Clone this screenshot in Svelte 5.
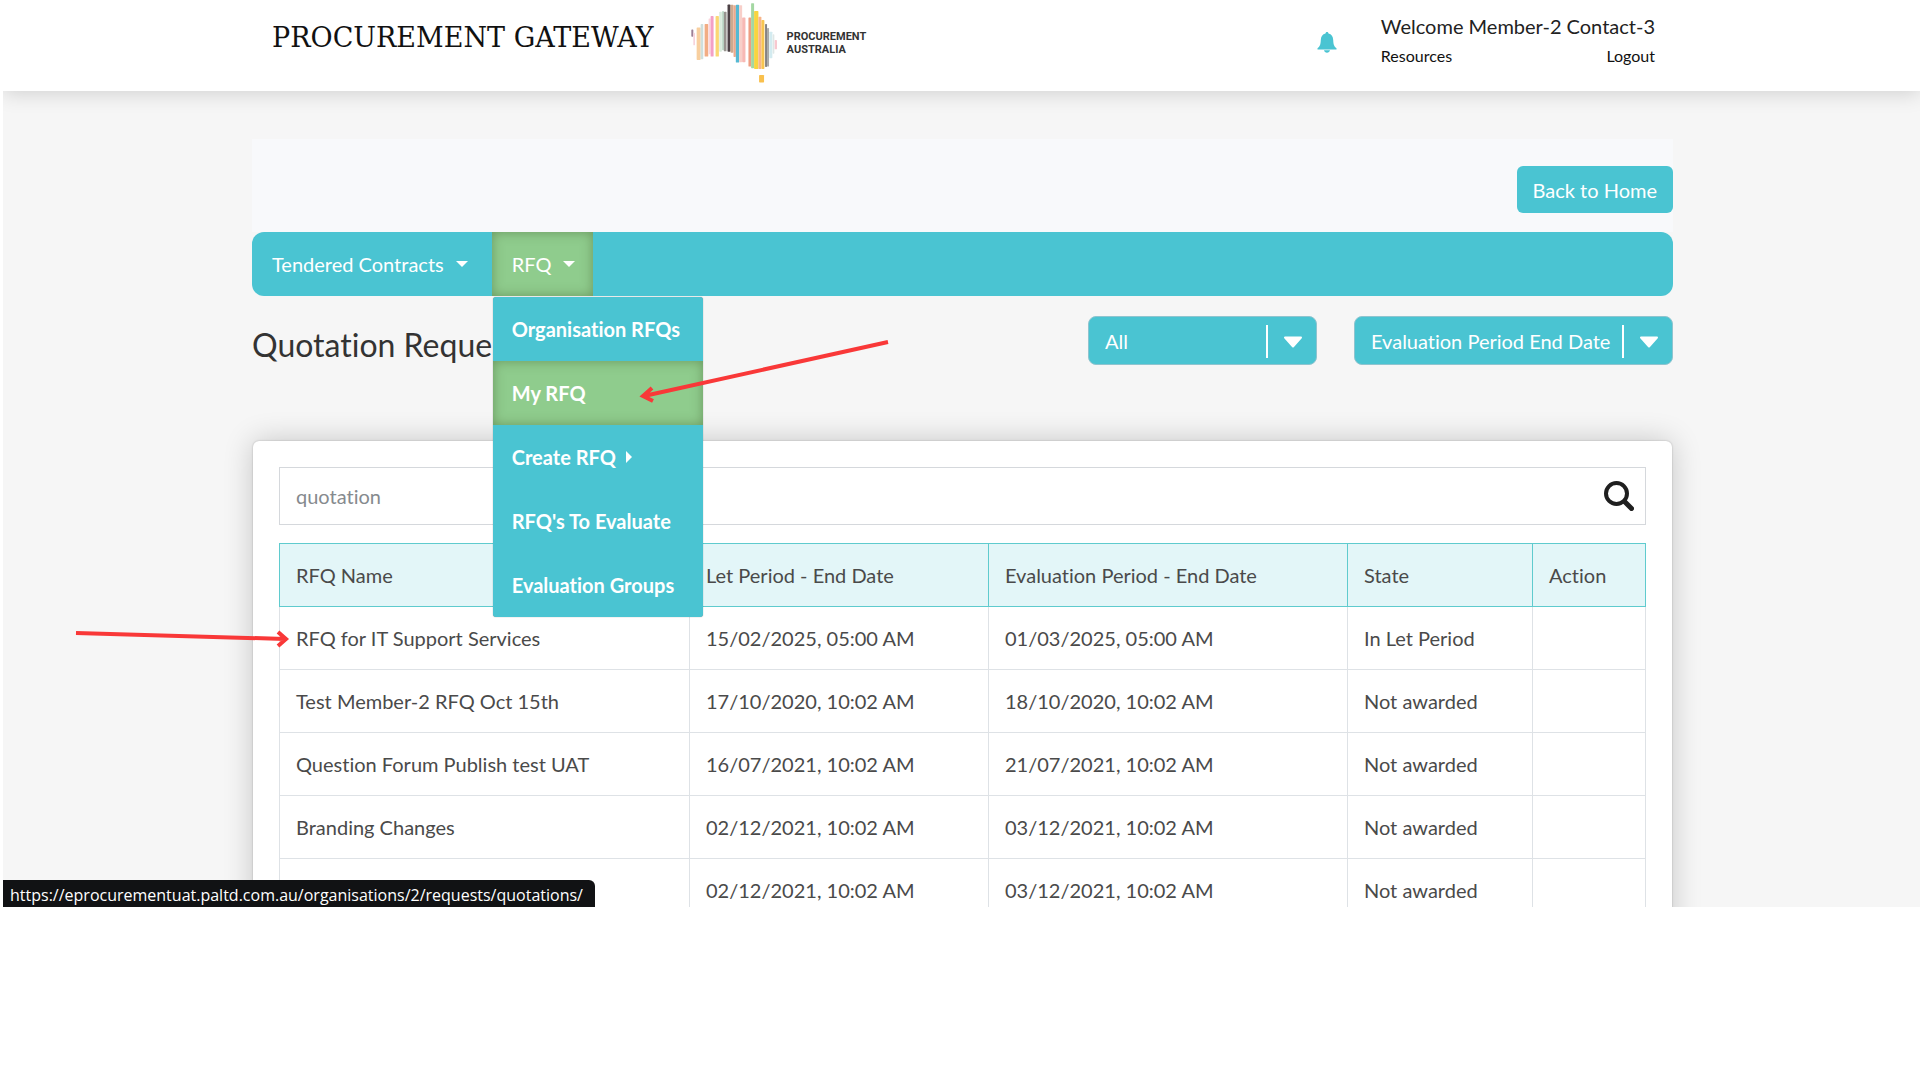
<script>
  const stripes = [
    [30, 88, 6, 22, '#9b7f96'],
    [36, 98, 5, 38, '#f7d3dc'],
    [46, 82, 12, 98, '#f8cf9f'],
    [58, 72, 8, 106, '#cfdfdd'],
    [70, 72, 11, 98, '#f2ad84'],
    [82, 55, 6, 108, '#fbd5dc'],
    [88, 48, 9, 122, '#f3a0c6'],
    [103, 48, 10, 122, '#fbd774'],
    [114, 35, 8, 120, '#d9ecdd'],
    [123, 33, 5, 118, '#b3d3bf'],
    [128, 35, 8, 119, '#97948f'],
    [139, 13, 9, 142, '#4c4145'],
    [148, 14, 9, 144, '#cfa98e'],
    [157, 15, 7, 156, '#f0a98b'],
    [164, 14, 10, 174, '#55b9d3'],
    [174, 15, 9, 172, '#f8cfc9'],
    [183, 52, 10, 135, '#f7b9b5'],
    [202, 52, 8, 148, '#ee9d83'],
    [210, 9, 9, 196, '#a3d7a2'],
    [219, 33, 13, 174, '#f8d43f'],
    [232, 50, 9, 157, '#f7b58a'],
    [241, 60, 9, 147, '#f8c550'],
    [252, 72, 6, 129, '#858283'],
    [258, 84, 6, 116, '#a9a9a9'],
    [265, 95, 9, 80, '#d3ebf0'],
    [275, 103, 5, 58, '#dfe7e6'],
    [281, 120, 7, 28, '#f8c8cf'],
    [234, 225, 15, 23, '#f9c04d']
  ];

  const menu = [
    { label: 'Organisation RFQs' },
    { label: 'My RFQ', active: true },
    { label: 'Create RFQ', submenu: true },
    { label: "RFQ's To Evaluate" },
    { label: 'Evaluation Groups' }
  ];

  const rows = [
    ['RFQ for IT Support Services', '15/02/2025, 05:00 AM', '01/03/2025, 05:00 AM', 'In Let Period'],
    ['Test Member-2 RFQ Oct 15th', '17/10/2020, 10:02 AM', '18/10/2020, 10:02 AM', 'Not awarded'],
    ['Question Forum Publish test UAT', '16/07/2021, 10:02 AM', '21/07/2021, 10:02 AM', 'Not awarded'],
    ['Branding Changes', '02/12/2021, 10:02 AM', '03/12/2021, 10:02 AM', 'Not awarded'],
    ['', '02/12/2021, 10:02 AM', '03/12/2021, 10:02 AM', 'Not awarded']
  ];
</script>

<div class="screen">
  <header>
    <div class="wrap bar">
      <span class="brand">PROCUREMENT GATEWAY</span>
      <div class="logo">
        <svg viewBox="26 0 268 258" width="89" height="86" aria-hidden="true">
          {#each stripes as [x, y, w, h, fill]}
            <rect {x} {y} width={w} height={h} rx="2" {fill} />
          {/each}
        </svg>
        <span>PROCUREMENT<br />AUSTRALIA</span>
      </div>
      <button class="bell" aria-label="Notifications">
        <svg viewBox="0 0 20 21" width="20" height="21">
          <path d="M10 0c1 0 1.400.700 1.500 1.500C14.600 2.200 16 4.500 16.200 8c.2 4.500 1 6.500 3.300 8.300v1.200H.5v-1.200C2.800 14.500 3.600 12.500 3.800 8 4 4.500 5.400 2.200 8.500 1.500 8.600.7 9 0 10 0zM7 18.300h6c-.3 1.600-1.500 2.500-3 2.500s-2.700-.9-3-2.500z" fill="#4ac4d2" />
        </svg>
      </button>
      <div class="user">
        <span class="welcome">Welcome Member-2 Contact-3</span>
        <div class="links"><a href="#resources">Resources</a><a href="#logout">Logout</a></div>
      </div>
    </div>
  </header>

  <main>
    <div class="wrap">
      <div class="top"><button class="home">Back to Home</button></div>
      <nav>
        <button class="tab">Tendered Contracts <i class="caret"></i></button>
        <div class="drop">
          <button class="tab active" aria-expanded="true">RFQ <i class="caret"></i></button>
          <div class="menu">
            {#each menu as item}
              <a href="#menu" class:active={item.active}>{item.label}{#if item.submenu}<i class="side"></i>{/if}</a>
            {/each}
          </div>
        </div>
      </nav>

      <div class="titlebar">
        <h1>Quotation Requests</h1>
        <div class="pick state">
          <select aria-label="State filter"><option>All</option></select>
          <svg viewBox="0 0 20 12" width="20" height="12"><path d="M2 1.500h16L10 10.500z" fill="#fff" stroke="#fff" stroke-width="2" stroke-linejoin="round" /></svg>
        </div>
        <div class="pick sort">
          <select aria-label="Sort by"><option>Evaluation Period End Date</option></select>
          <svg viewBox="0 0 20 12" width="20" height="12"><path d="M2 1.500h16L10 10.500z" fill="#fff" stroke="#fff" stroke-width="2" stroke-linejoin="round" /></svg>
        </div>
      </div>

      <section class="card">
        <div class="search">
          <input type="text" placeholder="quotation" aria-label="Search quotations" />
          <button aria-label="Search">
            <svg viewBox="0 0 30 30" width="30" height="30" fill="none" stroke="#1f1f1f" stroke-linecap="round"><circle cx="12.500" cy="12.500" r="10.500" stroke-width="4" /><path d="M20.500 20.500l7 7" stroke-width="5" /></svg>
          </button>
        </div>
        <table>
          <colgroup><col class="c1" /><col class="c2" /><col class="c3" /><col class="c4" /><col /></colgroup>
          <thead>
            <tr><th>RFQ Name</th><th>Let Period - End Date</th><th>Evaluation Period - End Date</th><th>State</th><th>Action</th></tr>
          </thead>
          <tbody>
            {#each rows as row}
              <tr>{#each row as cell}<td>{cell}</td>{/each}<td></td></tr>
            {/each}
          </tbody>
        </table>
      </section>
    </div>
  </main>

  <svg class="arrow a1" viewBox="0 0 216 20" width="216" height="20" aria-hidden="true"><path d="M2 4L211 10M204 3l8 7-8 7" /></svg>
  <svg class="arrow a2" viewBox="0 0 254 66" width="254" height="66" aria-hidden="true"><path d="M250 4L6 58M14 50l-9 8 10 5" /></svg>
  <div class="status">https://eprocurementuat.paltd.com.au/organisations/2/requests/quotations/</div>
</div>

<style>
  :global(body) { margin: 0; background: #fff; }
  * { box-sizing: border-box; }
  .screen {
    position: relative;
    height: 84vh;
    margin-left: 3px;
    overflow: hidden;
    background: #f6f6f6;
    font: 20px/24px Lato, sans-serif;
    font-variant-ligatures: none;
    color: #4a4a4a;
  }
  button, select, input { font: inherit; border: 0; margin: 0; }
  button { cursor: pointer; }
  a { color: inherit; text-decoration: none; }
  header, main { padding-left: 2px; }
  .wrap { max-width: 1421px; margin: 0 auto; }
  header { background: #fff; box-shadow: 0 2px 20px rgba(0, 0, 0, .16); }
  .bar { display: flex; align-items: flex-start; height: 91px; padding: 0 18px 0 20px; color: #222; }
  .brand { font: 27px/32px "DejaVu Serif", serif; color: #111; margin-top: 22px; white-space: nowrap; }
  .logo { display: flex; align-items: center; gap: 8px; margin-left: 36px; }
  .logo span { font: bold 11px/13px Roboto, sans-serif; color: #333; }
  .bell { margin: 32px 44px 0 auto; padding: 0; background: none; }
  .bell svg { display: block; }
  .user { padding-top: 14px; }
  .welcome { display: block; }
  .links { display: flex; justify-content: space-between; font-size: 16px; line-height: 20px; margin-top: 8px; color: #111; }
  .top { display: flex; justify-content: flex-end; margin-top: 48px; padding: 27px 0 19px; background: #f8f9fb; }
  .home { height: 47px; padding: 0 16px; border-radius: 6px; background: #4ac4d2; color: #fff; }
  nav { display: flex; height: 64px; border-radius: 12px; background: #4ac4d2; }
  .tab { display: flex; align-items: center; gap: 12px; height: 64px; padding: 0 18px 0 20px; background: none; color: #fff; }
  .tab:not(.active) { padding-right: 24px; }
  .active { background: #8fcc8d; box-shadow: inset 0 0 12px rgba(70, 100, 50, .5); }
  .caret { border: 6px solid transparent; border-top-color: #fff; border-bottom: 0; }
  .drop { position: relative; }
  .menu { position: absolute; top: 65px; left: 1px; z-index: 2; width: 210px; border-radius: 3px; background: #4ac4d2; box-shadow: 0 0 1px rgba(0, 0, 0, .5); }
  .menu a { display: flex; align-items: center; height: 64px; padding: 0 19px; color: #fff; font-weight: 700; white-space: nowrap; }
  .side { margin-left: 10px; border: 6px solid transparent; border-left-color: #fff; border-right: 0; }
  .titlebar { display: flex; align-items: flex-start; padding-top: 20px; height: 145px; }
  h1 { flex: 1; margin: 10px 0 0; font-size: 32px; line-height: 38px; font-weight: 400; color: #333; }
  .pick { position: relative; display: flex; }
  .pick select { width: 100%; height: 49px; padding: 0 50px 0 16px; appearance: none; border: 1px solid #8fc4cf; border-radius: 8px; background: #4ac4d2; color: #fff; }
  .pick::after { content: ''; position: absolute; right: 49px; top: 9px; bottom: 7px; width: 2px; background: #fff; }
  .pick svg { position: absolute; right: 14px; top: 20px; pointer-events: none; }
  .state { width: 229px; margin-right: 37px; }
  .sort { width: 319px; }
  .card { margin: 0 1px; padding: 26px; height: 600px; border-radius: 6px; background: #fff; box-shadow: 0 0 30px rgba(0, 0, 0, .2), 0 0 2px rgba(0, 0, 0, .25); }
  .search { display: flex; align-items: center; height: 58px; margin-bottom: 18px; border: 1px solid #d5d8dc; }
  .search input { flex: 1; height: 56px; padding: 0 16px; background: none; color: #777; }
  .search input::placeholder { color: #868a8e; opacity: 1; }
  .search button { padding: 0 11px; background: none; }
  .search svg { display: block; }
  table { width: 100%; border-collapse: collapse; table-layout: fixed; }
  th, td { height: 63px; padding: 0 16px; text-align: left; font-weight: 400; border: 1px solid #dee2e6; }
  th { background: #e3f6f8; border: 1px solid #5fcbce; }
  .c1 { width: 410px; }
  .c2 { width: 299px; }
  .c3 { width: 359px; }
  .c4 { width: 185px; }
  .arrow { position: absolute; z-index: 3; fill: none; stroke: #f93838; stroke-width: 4; pointer-events: none; }
  .a1 { left: 71px; top: 629px; }
  .a2 { left: 635px; top: 338px; }
  .status { position: absolute; left: 0; bottom: 0; z-index: 4; padding: 3px 12px 0 7px; border-top-right-radius: 6px; background: #111214; color: #fff; font: 16px/24px "Open Sans", sans-serif; white-space: nowrap; }
</style>
